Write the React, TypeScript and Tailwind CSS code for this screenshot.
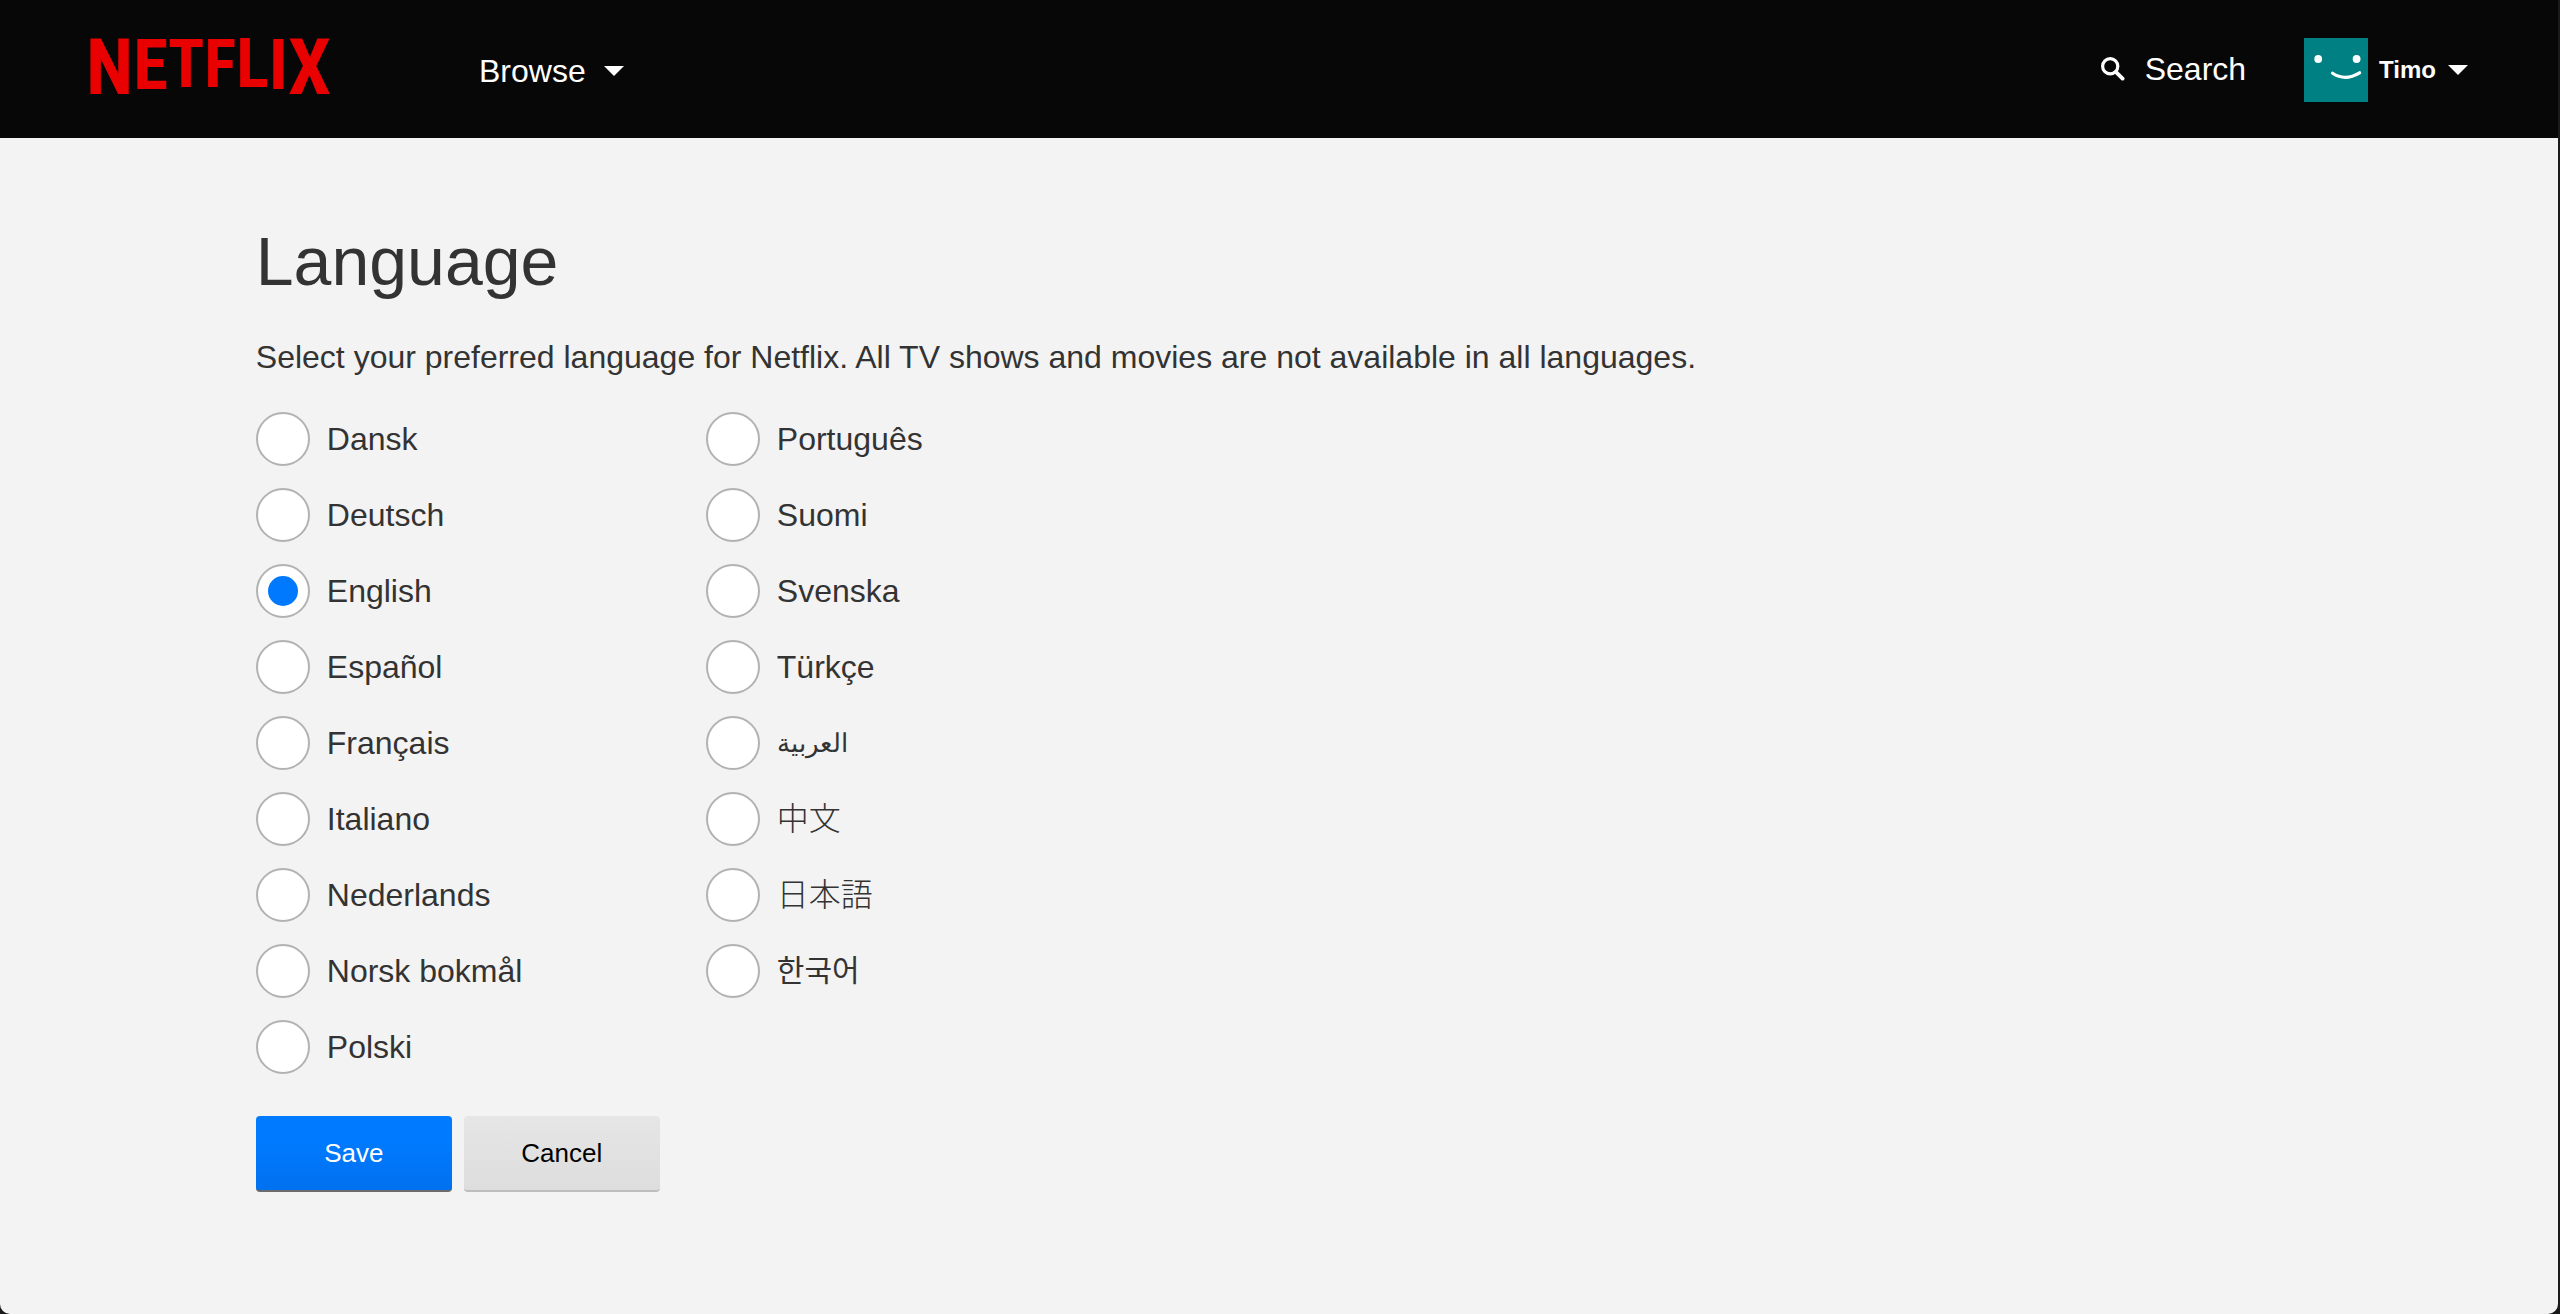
import React, { useState } from "react";

type Language = { name: string; className?: string };

const columns: Language[][] = [
  [
    { name: "Dansk" },
    { name: "Deutsch" },
    { name: "English" },
    { name: "Español" },
    { name: "Français" },
    { name: "Italiano" },
    { name: "Nederlands" },
    { name: "Norsk bokmål" },
    { name: "Polski" },
  ],
  [
    { name: "Português" },
    { name: "Suomi" },
    { name: "Svenska" },
    { name: "Türkçe" },
    { name: "العربية", className: "text-[26px]" },
    { name: "中文", className: "font-light" },
    { name: "日本語", className: "font-light" },
    { name: "한국어", className: "text-[30px]" },
  ],
];

// Letters hang from a common top edge and grow towards both ends, which gives the wordmark its arch.
const logoLetters = [
  { char: "N", size: 77 },
  { char: "E", size: 71 },
  { char: "T", size: 67 },
  { char: "F", size: 67 },
  { char: "L", size: 68 },
  { char: "I", size: 71 },
  { char: "X", size: 77 },
];

function Caret({ className }: { className: string }) {
  return (
    <svg viewBox="0 0 20 10" className={className} fill="currentColor" aria-hidden="true">
      <path d="M0 0H20L10 10Z" />
    </svg>
  );
}

function Logo() {
  return (
    <svg viewBox="0 0 240 70" className="h-[70px] w-[240px] overflow-visible" role="img" aria-label="Netflix">
      <text
        x="-4"
        fill="#e90000"
        fontFamily="'Roboto Condensed', 'Liberation Sans', sans-serif"
        fontWeight="700"
      >
        {logoLetters.map(({ char, size }) => (
          <tspan key={char} y={Math.round(3 + size * 0.711)} fontSize={size}>
            {char}
          </tspan>
        ))}
      </text>
    </svg>
  );
}

function SearchIcon() {
  return (
    <svg viewBox="0 0 24 24" className="size-6" fill="none" stroke="currentColor" aria-hidden="true">
      <circle cx="9.2" cy="9.2" r="7.6" strokeWidth="3.2" />
      <path d="M14.8 14.8L21.6 21.6" strokeWidth="3.8" strokeLinecap="round" />
    </svg>
  );
}

function Avatar() {
  return (
    <svg viewBox="0 0 64 64" className="size-16" aria-hidden="true">
      <rect width="64" height="64" fill="#008083" />
      <circle cx="14.2" cy="21" r="3.9" fill="#fff" />
      <circle cx="52.6" cy="21" r="3.9" fill="#fff" />
      <path d="M28.6 35.2Q41 43.6 55.6 34.8" fill="none" stroke="#fff" strokeWidth="3.2" strokeLinecap="round" />
    </svg>
  );
}

function Option({
  language,
  checked,
  onSelect,
}: {
  language: Language;
  checked: boolean;
  onSelect: () => void;
}) {
  return (
    <label className="flex h-[54px] items-center gap-[17px]">
      <input
        type="radio"
        name="language"
        value={language.name}
        checked={checked}
        onChange={onSelect}
        className="grid size-[54px] shrink-0 appearance-none place-content-center rounded-full border-2 border-[#b2b2b2] bg-white before:size-[30px] before:rounded-full checked:before:bg-[#0079ff]"
      />
      <span className={language.className}>{language.name}</span>
    </label>
  );
}

export default function App() {
  const [selected, setSelected] = useState("English");
  return (
    <div className="min-h-screen bg-[#1a1a1a] pr-0.5 font-['Liberation_Sans','Noto_Sans_CJK_JP','Noto_Sans_CJK_KR',sans-serif] text-[32px] leading-10 text-[#333333]">
      <div className="min-h-screen rounded-b-[10px] bg-[#f3f3f3]">
        <header className="flex h-[138px] items-center justify-between bg-[#070707] px-[90px] text-white">
          <div className="flex items-center pt-1">
            <a href="#home" className="block">
              <Logo />
            </a>
            <button type="button" className="ml-[149px] flex items-center gap-[18px]">
              Browse
              <Caret className="h-[10px] w-5" />
            </button>
          </div>
          <div className="flex items-center pt-0.5">
            <button type="button" className="flex items-center gap-5 pb-0.5">
              <SearchIcon />
              Search
            </button>
            <button type="button" className="ml-[58px] flex items-center text-2xl font-bold">
              <Avatar />
              <span className="ml-[11px]">Timo</span>
              <Caret className="ml-3 h-[10px] w-5" />
            </button>
          </div>
        </header>
        <main className="px-[10%] pt-[83px] pb-16">
          <h1 className="text-[68px] leading-[80px]">Language</h1>
          <p className="mt-9">
            Select your preferred language for Netflix. All TV shows and movies are not available in all languages.
          </p>
          <form onSubmit={(e) => e.preventDefault()}>
            <div className="mt-[35px] flex" role="radiogroup" aria-label="Language">
              {columns.map((languages) => (
                <div key={languages[0].name} className="flex w-[450px] flex-col gap-[22px]">
                  {languages.map((language) => (
                    <Option
                      key={language.name}
                      language={language}
                      checked={selected === language.name}
                      onSelect={() => setSelected(language.name)}
                    />
                  ))}
                </div>
              ))}
            </div>
            <div className="mt-[42px] flex gap-3 text-[26px]">
              <button
                type="submit"
                className="h-[76px] w-[196px] rounded-[4px] border-b-2 border-[#6b6b6b] bg-linear-to-b from-[#007bff] from-30% to-[#0071f0] text-white"
              >
                Save
              </button>
              <button
                type="button"
                className="h-[76px] w-[196px] rounded-[4px] border-b-2 border-[#bdbdbd] bg-linear-to-b from-[#e6e6e6] to-[#dddddd] text-black"
              >
                Cancel
              </button>
            </div>
          </form>
        </main>
      </div>
    </div>
  );
}
